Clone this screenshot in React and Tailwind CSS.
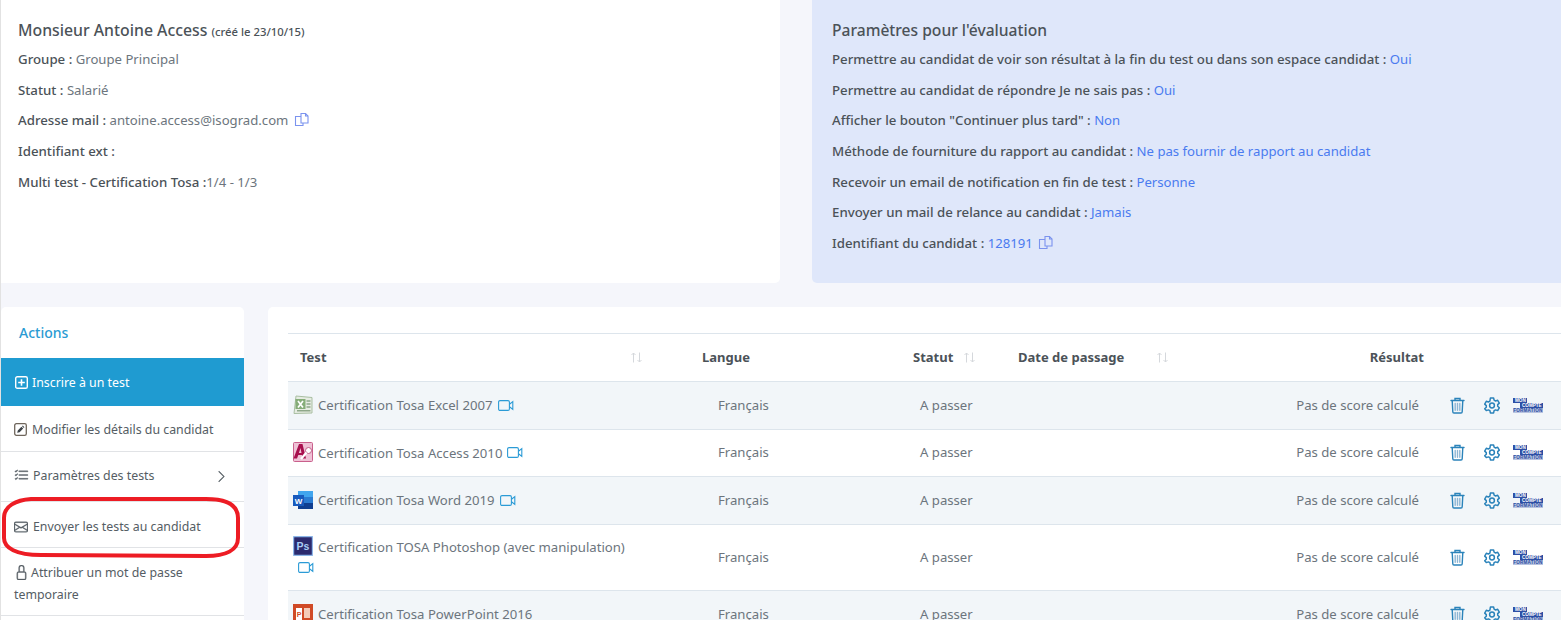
import React from 'react';
import { BsChevronRight, BsListCheck, BsEnvelope, BsLock } from 'react-icons/bs';

const Label = ({ children }) => <span className="font-medium text-[13.25px] text-[#4b5258]">{children}</span>;
const Val = ({ children }) => <span className="text-[#6c757d]">{children}</span>;
const Blue = ({ children }) => <span className="text-[#4a7bf0]">{children}</span>;

const Line = ({ children }) => <p className="h-[21px] leading-[21px] mb-[9.7px]">{children}</p>;

const Copy = () => (
  <svg width="15" height="15" viewBox="0 0 15 15" fill="none" stroke="#7b93ee" strokeWidth="1.1" className="inline ml-[2px] -mt-[5px]">
    <path d="M7 1.5h4.5l2.5 2.5v7H7z" />
    <path d="M11.5 1.5V4H14" />
    <path d="M7 4.5H1.5v9H9V11" />
  </svg>
);

const Video = () => (
  <svg width="16" height="11" viewBox="0 0 16 11" fill="none" stroke="#2b9bd6" strokeWidth="1.1" className="inline ml-[5px] -mt-[2px]">
    <rect x="0.6" y="0.6" width="10.8" height="9.8" rx="1.4" />
    <path d="M11.5 4.2L14.8 1.6V9.4L11.5 6.8" />
  </svg>
);

const SortIcon = () => (
  <svg width="13" height="11" viewBox="0 0 13 11" fill="none" stroke="#d5d8dc" strokeWidth="1">
    <path d="M3.5 10.5V1M1.5 3L3.5 1L5.5 3M9.5 .5V10M7.5 8L9.5 10L11.5 8" />
  </svg>
);

const Excel = () => (
  <svg width="20" height="20" viewBox="0 0 20 20" className="inline -mt-[3px] mr-[5px]">
    <path d="M3 1L19 2.5V18L1 18.5z" fill="#e6ece2" stroke="#a9bfa2" />
    <rect x="2.5" y="4" width="10" height="10" fill="#86ad79" />
    <path d="M5 6l5 6.5M10 6l-5 6.5" stroke="#fff" strokeWidth="1.7" />
    <path d="M13.5 6h4M13.5 9h4M13.5 12h4M4 15.8h13.5" stroke="#8fa88a" strokeWidth="1.4" />
  </svg>
);

const Access = () => (
  <svg width="20" height="20" viewBox="0 0 20 20" className="inline -mt-[3px] mr-[5px]">
    <rect x="0.5" y="0.5" width="19" height="19" rx="1" fill="#efc2d6" stroke="#c9608c" />
    <path d="M.5 16.5L6 2h3.5L13 16.5H9.6l-.7-3.4H5.3l-1.3 3.4zM5.9 11h2.6L7.5 6z" fill="#a8104e" fillRule="evenodd" />
    <circle cx="15.5" cy="8.5" r="3" fill="#fff" stroke="#c05a86" />
    <path d="M13.5 10.5L8 17" stroke="#fff" strokeWidth="2.2" />
  </svg>
);

const Word = () => (
  <svg width="20" height="20" viewBox="0 0 20 20" className="inline -mt-[3px] mr-[5px]">
    <rect x="5" y="1" width="15" height="6" fill="#41a5ee" />
    <rect x="5" y="7" width="15" height="6" fill="#2b7cd3" />
    <rect x="5" y="13" width="15" height="6" fill="#103f91" />
    <rect x="0" y="5" width="11" height="11" fill="#185abd" />
    <text x="5.5" y="13.5" textAnchor="middle" fontSize="8" fontWeight="700" fill="#fff" fontFamily="'Liberation Sans', sans-serif">W</text>
  </svg>
);

const Ps = () => (
  <svg width="20" height="20" viewBox="0 0 20 20" className="inline -mt-[3px] mr-[5px]">
    <rect x="0.5" y="0.5" width="19" height="19" rx="1" fill="#2b2a6e" stroke="#8db6e8" strokeWidth="1.4" />
    <text x="10" y="14" textAnchor="middle" fontSize="10.5" fontWeight="700" fill="#a9cdf5" fontFamily="'Liberation Sans', sans-serif">Ps</text>
  </svg>
);

const Ppt = () => (
  <svg width="20" height="20" viewBox="0 0 20 20" className="inline -mt-[3px] mr-[5px]">
    <rect width="20" height="20" fill="#d04a26" />
    <rect x="3" y="4" width="6" height="12" fill="#fff" />
    <rect x="11" y="4" width="6" height="10" fill="#f4cbb9" />
    <text x="6" y="13" textAnchor="middle" fontSize="7" fontWeight="700" fill="#d04a26" fontFamily="'Liberation Sans', sans-serif">P</text>
  </svg>
);

const Trash = () => (
  <svg width="15" height="17" viewBox="0 0 15 17" fill="none" stroke="#2b83ba" strokeWidth="1.4" strokeLinecap="round">
    <path d="M1 3.5h13M5 3.5V1.5h5v2M2.2 3.5l.6 11.2c0 .9.6 1.3 1.2 1.3h7c.6 0 1.2-.4 1.2-1.3l.6-11.2" />
    <path d="M5.2 6.5v6.8M7.5 6.5v6.8M9.8 6.5v6.8" stroke="#8db6d4" />
  </svg>
);

// cog with six round lobes and a ring in the middle
const Gear = () => (
  <svg width="16" height="17" viewBox="0 0 16 17" fill="none" stroke="#2b83ba" strokeWidth="1.5" strokeLinejoin="round">
    <path d="M6.4 1h3.2l.5 2.2 1.5.8 2.1-.7 1.6 2.8-1.6 1.5v1.7l1.6 1.5-1.6 2.8-2.1-.7-1.5.8-.5 2.2H6.4l-.5-2.2-1.5-.8-2.1.7L.7 11.8l1.6-1.5V8.6L.7 7.1l1.6-2.8 2.1.7 1.5-.8z" />
    <circle cx="8" cy="8.5" r="2.4" />
  </svg>
);

const Mcf = () => (
  <svg width="30" height="15" viewBox="0 0 30 15" fontFamily="'Liberation Sans', sans-serif" fontSize="4.6" fontWeight="700">
    <rect x="0" y="0" width="14" height="5" fill="#2d4fa5" />
    <rect x="7" y="5" width="23" height="5" fill="#2d4fa5" />
    <rect x="0" y="10" width="30" height="5" fill="#b8c3e0" />
    <text x="2" y="4.2" fill="#fff">MON</text>
    <text x="9" y="9.2" fill="#fff">COMPTE</text>
    <text x="0.3" y="14.2" fill="#2d4fa5" textLength="29">FORMATION</text>
  </svg>
);

const PlusIcon = () => (
  <svg width="13" height="13" viewBox="0 0 13 13" fill="none" stroke="#fff" strokeWidth="1.4" className="inline mr-[4px] -mt-[2px]">
    <rect x="0.7" y="0.7" width="11.6" height="11.6" rx="1.6" />
    <path d="M6.5 3.2v6.6M3.2 6.5h6.6" strokeWidth="1.6" />
  </svg>
);

const EditIcon = () => (
  <svg width="13" height="13" viewBox="0 0 13 13" className="inline mr-[5px] -mt-[2px]">
    <rect x="0.7" y="0.7" width="11.6" height="11.6" rx="1.6" fill="none" stroke="#6f665c" strokeWidth="1.3" />
    <path d="M3.2 9.8l.6-2.4 3.6-3.6 1.8 1.8-3.6 3.6zM8 3.2l.8-.6 1.6 1.6-.6.8z" fill="#3d4348" />
  </svg>
);

const tests = [
  { name: 'Certification Tosa Excel 2007', icon: <Excel />, h: 'h-[48px]', bg: 'bg-[#f2f6f9]', video: true },
  { name: 'Certification Tosa Access 2010', icon: <Access />, h: 'h-[47px]', bg: 'bg-white', video: true },
  { name: 'Certification Tosa Word 2019', icon: <Word />, h: 'h-[48px]', bg: 'bg-[#f2f6f9]', video: true },
  { name: 'Certification TOSA Photoshop (avec manipulation)', icon: <Ps />, h: 'h-[66px]', bg: 'bg-white', video: true },
  { name: 'Certification Tosa PowerPoint 2016', icon: <Ppt />, h: 'h-[48px]', bg: 'bg-[#f2f6f9]', video: false },
];

const actions = [
  { icon: <EditIcon />, text: 'Modifier les détails du candidat', cls: 'h-[46px] pt-[13px]' },
  { icon: <BsListCheck strokeWidth="0.4" className="inline text-[15px] mr-[4px] -mt-[2px]" />, text: 'Paramètres des tests', cls: 'h-[50px] pt-[13px]', arrow: true },
  { icon: <BsEnvelope strokeWidth="0.4" className="inline text-[14px] mr-[5px] -mt-[2px]" />, text: 'Envoyer les tests au candidat', cls: 'h-[46px] pt-[14px]' },
  { icon: <BsLock strokeWidth="0.4" className="inline text-[15px] mr-[2px] -mt-[2px]" />, text: 'Attribuer un mot de passe temporaire', cls: 'h-[68px] pt-[14px]' },
];

export default function App() {
  return (
    <div className="h-[620px] overflow-hidden bg-[#f5f6fb] border-l border-[#e2e2e2] text-[13.15px] text-[#6c757d]" style={{ fontFamily: "'Noto Sans', sans-serif" }}>
      <div className="flex gap-[32px] h-[283px]">
        <div className="w-[779px] bg-white rounded-br-[5px] px-[17px] pt-[20px]">
          <h2 className="h-[25px] leading-[21px] mb-[4px] text-[15.8px] font-medium text-[#4b5258]">
            Monsieur Antoine Access <span className="text-[11.3px] font-medium">(créé le 23/10/15)</span>
          </h2>
          <Line><Label>Groupe :</Label> <Val>Groupe Principal</Val></Line>
          <Line><Label>Statut :</Label> <Val>Salarié</Val></Line>
          <Line><Label>Adresse mail :</Label> <Val>antoine.access@isograd.com</Val> <Copy /></Line>
          <Line><Label>Identifiant ext :</Label></Line>
          <Line><Label>Multi test - Certification Tosa :</Label><Val>1/4 - 1/3</Val></Line>
        </div>
        <div className="flex-1 bg-[#dfe7fa] rounded-bl-[5px] px-[20px] pt-[20px]">
          <h2 className="h-[25px] leading-[21px] mb-[4px] text-[15.6px] font-medium text-[#4b5258]">Paramètres pour l'évaluation</h2>
          <Line><Label>Permettre au candidat de voir son résultat à la fin du test ou dans son espace candidat :</Label> <Blue>Oui</Blue></Line>
          <Line><Label>Permettre au candidat de répondre Je ne sais pas :</Label> <Blue>Oui</Blue></Line>
          <Line><Label>Afficher le bouton "Continuer plus tard" :</Label> <Blue>Non</Blue></Line>
          <Line><Label>Méthode de fourniture du rapport au candidat :</Label> <Blue>Ne pas fournir de rapport au candidat</Blue></Line>
          <Line><Label>Recevoir un email de notification en fin de test :</Label> <Blue>Personne</Blue></Line>
          <Line><Label>Envoyer un mail de relance au candidat :</Label> <Blue>Jamais</Blue></Line>
          <Line><Label>Identifiant du candidat :</Label> <Blue>128191</Blue> <Copy /></Line>
        </div>
      </div>

      <div className="flex gap-[24px] mt-[24px]">
        {/* actions */}
        <div className="relative w-[243px] h-[320px] bg-white rounded-t-[5px] shrink-0 text-[12.35px]">
          <div className="h-[51px] pl-[18px] pt-[15px] text-[14px] leading-[22px] font-medium text-[#2a9bd3]">Actions</div>
          <div className="h-[48px] bg-[#1f9bd1] text-white pl-[14px] pt-[14px] leading-[21px]">
            <PlusIcon />Inscrire à un test
          </div>
          {actions.map(a => (
            <div key={a.text} className={`${a.cls} relative border-b border-[#e1e3e6] pl-[13px] pr-[20px] leading-[22px] text-[#555d64]`}>
              {a.icon}{a.text}
              {a.arrow && <BsChevronRight strokeWidth="0.5" className="absolute right-[16px] top-[18px] text-[13px]" />}
            </div>
          ))}
          <svg className="absolute left-[0px] top-[189px]" width="240" height="64" viewBox="0 0 240 64" fill="none">
            <path d="M30 3H205C225 3 237 8 237 22V42C237 54 225 60 205 60L40 59C15 59 3 52 3 42V22C3 10 15 4 30 3Z" stroke="#ed1c24" strokeWidth="4" />
          </svg>
        </div>

        {/* table */}
        <div className="flex-1 bg-white rounded-tl-[5px] pl-[20px] pt-[26px]">
          <table className="w-full table-fixed border-collapse">
            <colgroup>
              <col className="w-[402px]" />
              <col className="w-[210px]" />
              <col className="w-[106px]" />
              <col className="w-[174px]" />
              <col className="w-[260px]" />
              <col />
            </colgroup>
            <thead>
              <tr className="h-[48px] border-y border-[#dde5ec] text-[#4b5258] text-[13px]">
                <th className="pl-[12px] text-left font-bold">
                  <div className="flex items-center justify-between pr-[47px]">Test <SortIcon /></div>
                </th>
                <th className="pl-[12px] text-left font-bold">Langue</th>
                <th className="pl-[13px] text-left font-bold">
                  <div className="flex items-center gap-[10px]">Statut <SortIcon /></div>
                </th>
                <th className="pl-[12px] text-left font-bold">
                  <div className="flex items-center justify-between pr-[11px]">Date de passage <SortIcon /></div>
                </th>
                <th className="pr-[16px] text-right font-bold">Résultat</th>
                <th />
              </tr>
            </thead>
            <tbody>
              {tests.map(t => (
                <tr key={t.name} className={`${t.h} ${t.bg} border-b border-[#dde5ec]`}>
                  <td className="pl-[5px] pr-[48px] leading-[21px]">
                    {t.icon}{t.name}{t.video && <Video />}
                  </td>
                  <td className="pl-[28px]">Français</td>
                  <td className="pl-[20px]">A passer</td>
                  <td />
                  <td className="pr-[21px] text-right">Pas de score calculé</td>
                  <td className="pl-[10px]">
                    <div className="flex items-center gap-[19px] -mt-[1px]">
                      <Trash />
                      <Gear />
                      <div className="-ml-[6px]"><Mcf /></div>
                    </div>
                  </td>
                </tr>
              ))}
            </tbody>
          </table>
        </div>
      </div>
    </div>
  );
}
